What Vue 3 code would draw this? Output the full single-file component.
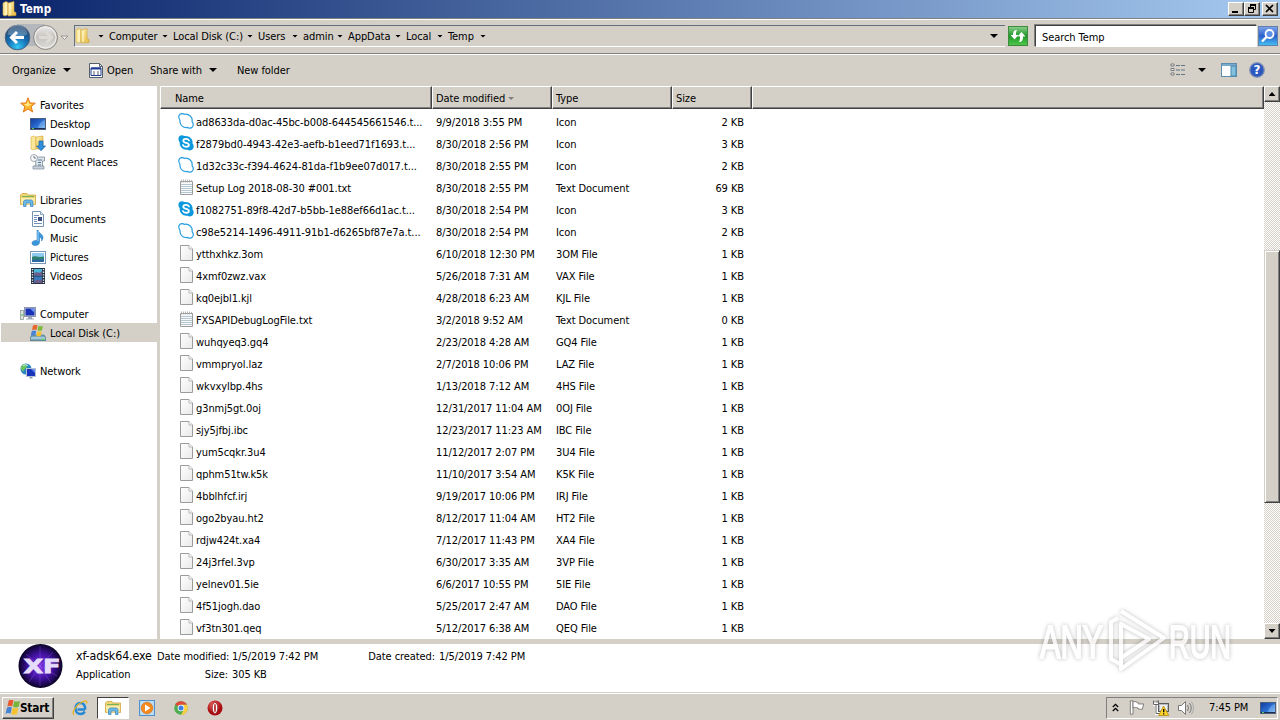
<template>
    <div class="window">
        <!-- icon sprite -->
        <svg class="sprite" width="0" height="0">
            <defs>
                <linearGradient id="gFolder" x1="0" y1="0" x2="1" y2="1">
                    <stop offset="0" stop-color="#fff3b0" />
                    <stop offset="1" stop-color="#e5b83c" />
                </linearGradient>
                <linearGradient id="gBlue" x1="0" y1="0" x2="1" y2="1">
                    <stop offset="0" stop-color="#123a9c" />
                    <stop offset="0.6" stop-color="#2f72d6" />
                    <stop offset="1" stop-color="#8fc4f5" />
                </linearGradient>
                <linearGradient id="gPage" x1="0" y1="0" x2="1" y2="1">
                    <stop offset="0" stop-color="#ffffff" />
                    <stop offset="1" stop-color="#e9e9e9" />
                </linearGradient>
                <radialGradient id="gBack" cx="0.5" cy="0.9" r="0.8">
                    <stop offset="0" stop-color="#35c8f5" />
                    <stop offset="0.5" stop-color="#1673b8" />
                    <stop offset="1" stop-color="#1d4470" />
                </radialGradient>
                <linearGradient id="gForward" x1="0" y1="0" x2="0" y2="1">
                    <stop offset="0" stop-color="#ececec" />
                    <stop offset="0.5" stop-color="#c4c2be" />
                    <stop offset="1" stop-color="#e2e0dc" />
                </linearGradient>
                <radialGradient id="gXf">
                    <stop offset="0" stop-color="#7a32dd" />
                    <stop offset="0.55" stop-color="#4312a4" />
                    <stop offset="0.85" stop-color="#1d0850" />
                    <stop offset="1" stop-color="#0a0322" />
                </radialGradient>
                <radialGradient id="gOpera" cx="0.4" cy="0.3">
                    <stop offset="0" stop-color="#f06a6a" />
                    <stop offset="1" stop-color="#a80c10" />
                </radialGradient>
                <linearGradient id="gSearch" x1="0" y1="0" x2="0" y2="1">
                    <stop offset="0" stop-color="#7fa6ea" />
                    <stop offset="0.5" stop-color="#2c5fce" />
                    <stop offset="1" stop-color="#45c3f2" />
                </linearGradient>
                <linearGradient id="gGreen" x1="0" y1="0" x2="0" y2="1">
                    <stop offset="0" stop-color="#8ccf8c" />
                    <stop offset="0.5" stop-color="#1f9628" />
                    <stop offset="1" stop-color="#4fc94a" />
                </linearGradient>
            </defs>
            <symbol id="i-folder" viewBox="0 0 16 16">
                <path d="M1 2 4 .5l2 1v12l-3 1.500-2-1z" fill="#fae79a" stroke="#d6ad42" stroke-width=".6" />
                <path d="M6 2l6-1.500v10l2 1v3L6 15z" fill="url(#gFolder)" stroke="#cfa035" stroke-width=".6" />
                <path d="M4 2v12M8 3v11" stroke="#fffbe0" />
            </symbol>
            <symbol id="i-star" viewBox="0 0 16 16">
                <path d="M8 .8 10 6l5.3.2-4.2 3.4 1.6 5.4L8 12l-4.700 3 1.600-5.400L.7 6.200 6 6z" fill="#fbb829" stroke="#e2761b" />
                <path d="M8 3 9 7l3 .4-5 2L4 7l3-.3z" fill="#ffe98a" />
            </symbol>
            <symbol id="i-desktop" viewBox="0 0 16 16">
                <rect x=".5" y="2.500" width="15" height="11" fill="url(#gBlue)" stroke="#4a5e7e" />
                <path d="M1 12.500h14" stroke="#1d2c4c" />
                <path d="M2 12.500h2" stroke="#5fc45a" />
                <path d="M15 4c-4 1-6 4-7 8h7z" fill="#9ed0f8" opacity=".4" />
            </symbol>
            <symbol id="i-downloads" viewBox="0 0 16 16">
                <path d="M1 2 4 1l2 1v12l-3 1-2-1z" fill="#fae79a" stroke="#d6ad42" stroke-width=".6" />
                <path d="M6 2l7-1v13H6z" fill="url(#gFolder)" stroke="#cfa035" stroke-width=".6" />
                <path d="M9 6h4v5h2.500L11 15.700 6.500 11H9z" fill="#2f8fdd" stroke="#1b5fa8" stroke-width=".7" />
            </symbol>
            <symbol id="i-recent" viewBox="0 0 16 16">
                <path d="M5 3h9.500v4h-2v7.500H4V12h2z" fill="#dde5ec" stroke="#7f8b97" stroke-width=".8" />
                <path d="M8 6h4M8 8.500h3M8 11h3" stroke="#5e7790" />
                <path d="M3 12h11v3H3z" fill="#c6d2dd" stroke="#7f8b97" stroke-width=".7" />
                <circle cx="4" cy="4" r="3.500" fill="#f6f8fa" stroke="#8b949e" stroke-width=".8" />
                <path d="M4 2v2h2" fill="none" stroke="#55606c" stroke-width=".8" />
            </symbol>
            <symbol id="i-libraries" viewBox="0 0 16 16">
                <path d="M.5 3 2 1.500h5L8 3h7.500v9.500H.5z" fill="#f3d878" stroke="#cfa43d" stroke-width=".8" />
                <path d="M2 4.500h12" stroke="#76b35c" stroke-width="1.200" />
                <path d="M.8 6h14.500l-1 6.500H1.600z" fill="#fbecaa" />
                <path d="M3.500 14.500V9.300L5 8h6.500L13 9.300v5.200h-2.500V11H6v3.500z" fill="#6db9e8" stroke="#3781b8" stroke-width=".7" />
            </symbol>
            <symbol id="i-documents" viewBox="0 0 16 16">
                <path d="M2.500.5h8l3 3v12h-11z" fill="#fdfefe" stroke="#7793ad" />
                <path d="M10.500.5v3h3" fill="#dce8f2" stroke="#7793ad" stroke-width=".8" />
                <path d="M4 4.500h5M4 6.500h3M4 8.500h3M4 10.500h3M4 12.500h8" stroke="#6781b4" stroke-width=".9" />
                <rect x="8" y="6" width="4" height="4" fill="#3b4f80" />
            </symbol>
            <symbol id="i-music" viewBox="0 0 16 16">
                <path d="M8 0c0 3 5 4 5 7.500 0 1.800-1 3-1.500 3.500C12 8 10 7 9.500 7v5c0 2.500-2 3.500-4.300 3.500S2 14.400 2 13c0-1.700 2-2.800 5-2.600V0z" fill="#3a97dc" stroke="#1c6dad" stroke-width=".5" />
                <path d="M8 1v10" stroke="#9bd5f8" />
            </symbol>
            <symbol id="i-pictures" viewBox="0 0 16 16">
                <rect x=".5" y="2.500" width="15" height="12" fill="#fff" stroke="#7a98b5" />
                <rect x="2" y="4" width="12" height="9" fill="#8ecbf0" />
                <path d="M2 8c3-2 5 1 12-.500V13H2z" fill="#31816f" />
                <path d="M2 11c4-1 8 0 12-1v3H2z" fill="#2b69a5" />
            </symbol>
            <symbol id="i-videos" viewBox="0 0 16 16">
                <rect x="1" y="0" width="14" height="16" fill="#233142" />
                <rect x="4" y="1" width="8" height="6.500" fill="#4db5da" />
                <rect x="4" y="8.500" width="8" height="6.500" fill="#3a79bd" />
                <path d="M4 6c3-4 5 1 8-3v4.500H4zM4 14c3-4 5 0 8-3v4H4z" fill="#6d5d8c" />
                <path d="M2.500 1v14M13.500 1v14" stroke="#e9eef2" stroke-width="1.400" stroke-dasharray="1.300 1.300" />
            </symbol>
            <symbol id="i-computer" viewBox="0 0 16 16">
                <rect x=".5" y="4.500" width="3" height="9" fill="#dfe4e0" stroke="#8e9a94" stroke-width=".8" />
                <path d="M1.500 9h1" stroke="#45b849" stroke-width="2" />
                <rect x="4.500" y="1.500" width="11" height="9" fill="#cfd6e2" stroke="#8d97a9" />
                <rect x="5.500" y="2.500" width="9" height="7" fill="#1932b8" />
                <path d="M10 2.500h4.500v4.500z" fill="#6a91ee" />
                <path d="M8 11h4v1.500h2v1H6v-1h2z" fill="#9ba6b8" />
            </symbol>
            <symbol id="i-disk" viewBox="0 0 16 16">
                <path d="M2 10h12l2 3v2.500H0V13z" fill="#7ba7bd" stroke="#4b7387" stroke-width=".7" />
                <path d="M1 13h14" stroke="#d2e7f0" />
                <path d="M11.500 14.300h3" stroke="#56e05d" stroke-width="1.200" />
                <path d="M3 .5c2-1 3.500-.500 4.500 0L6.500 5c-1-.700-3-.700-4.500 0z" fill="#e8642b" />
                <path d="M8.500.8c1.500.800 2.500.700 4.500 0l-1 4.500c-1.500.700-3 .700-4.500 0z" fill="#7cba3c" />
                <path d="M1.800 6c1.500-.800 3-.700 4.500 0l-1 4.500c-1.500-.700-3-.700-4.500 0z" fill="#4a83d6" />
                <path d="M7.300 6.300c1.500.800 2.500.700 4.500 0l-1 4.500c-1.500.700-3 .700-4.500 0z" fill="#f5c22e" />
            </symbol>
            <symbol id="i-network" viewBox="0 0 16 16">
                <circle cx="6" cy="6" r="5.500" fill="#2785bf" />
                <path d="M2 2.500C4 0 6 1 7 2.500S4 6 3.500 8 1 6 .7 5zM7 7l3-2 1 3-3 3z" fill="#6cc55c" />
                <path d="M3 2.500q3-1.500 5 0" stroke="#c8ecff" fill="none" />
                <rect x="6.500" y="5.500" width="9" height="8" fill="#1834bd" stroke="#b8c3d6" />
                <path d="M11 6h4v4z" fill="#658cf0" />
                <path d="M9.500 14h3v1.500h-3z" fill="#8e99ab" />
            </symbol>
            <symbol id="i-skype-outline" viewBox="0 0 16 16">
                <path d="M2 1.200C3.500.3 5.200.6 6.200 1.300c5-.8 8.600 2.900 7.900 7.300 1.500 2 1.500 3.800.4 5.200-1.300 1.500-3.300 1.600-4.800.6C5 15.200 1.500 11.800 2 7.300.5 5 .3 2.800 2 1.200z" fill="#fff" stroke="#2a9fe0" stroke-width="1.200" />
            </symbol>
            <symbol id="i-skype" viewBox="0 0 16 16">
                <path d="M1.500 1C3 0 5 .2 6.200 1c5-.8 9 2.900 8.300 7.300 1.700 2.200 1.500 4.200.3 5.700-1.500 1.800-3.600 1.700-5.200.7C5 15.500 1.200 11.800 1.700 7.300 0 5 0 2.600 1.500 1z" fill="#0b98dc" />
                <path d="M11 5.500C10 3.300 5.300 3.300 5.300 5.700c0 2.800 5.600 1.500 5.600 4.200 0 2.400-5 2.500-6 .100" fill="none" stroke="#fff" stroke-width="1.800" stroke-linecap="round" />
            </symbol>
            <symbol id="i-file" viewBox="0 0 16 16">
                <path d="M2.500.5H11l3.500 3.500v11.500h-12z" fill="url(#gPage)" stroke="#9b9b9b" />
                <path d="M11 .5v3.500h3.500" fill="#fff" stroke="#b5b5b5" />
            </symbol>
            <symbol id="i-text" viewBox="0 0 16 16">
                <path d="M2.500 2.500h12v13h-12z" fill="#f7f9fa" stroke="#9b9b9b" />
                <path d="M3 5.500h11M3 7.500h11M3 9.500h11M3 11.500h11M3 13.500h11" stroke="#b6c6cf" />
                <path d="M3.500.5v3M5.500.5v3M7.500.5v3M9.500.5v3M11.500.5v3M13.500 1v2" stroke="#a5a5a5" stroke-width=".8" />
            </symbol>
            <symbol id="i-flag" viewBox="0 0 18 18">
                <path d="M1.500 1.500h3v15h-3z" fill="#fff" stroke="#73716d" />
                <path d="M4.500 2.500c3-1 4 1 6 1v1.500h6l-1.500 6c-2 .500-3-.500-5-.500V9.500c-2-.500-3.500-1-5.500 0z" fill="#fff" stroke="#73716d" />
            </symbol>
            <symbol id="i-windows" viewBox="0 0 16 16">
                <path d="M4 .5C6-.7 7.500-.5 9 .5L7.600 7C6 6 4.200 6 2.500 7z" fill="#e9582c" />
                <path d="M10 1c2 1 4 .8 6-.300L14.500 7.300c-2 1-4 1-6 0z" fill="#76b43b" />
                <path d="M2.200 8C4 7 5.800 7 7.300 8L6 14.500C4 13.500 2.500 13.500.5 14.700z" fill="#4783d4" />
                <path d="M8.200 8.300c2 1 4 1 6 0L12.700 15c-2 1-4 1-6 0z" fill="#f6c32f" />
            </symbol>
        </svg>

        <!-- title bar -->
        <header class="title-bar">
            <svg class="icon16"><use href="#i-folder" /></svg>
            <span class="title">Temp</span>
            <div class="controls">
                <button class="ctl"><svg width="12" height="10"><path d="M2 8h6" stroke="#000" stroke-width="2" /></svg></button>
                <button class="ctl">
                    <svg width="12" height="10">
                        <path d="M4.500 4V1.500h5v4H8" fill="none" stroke="#000" />
                        <path d="M4 1h6M2 4h6" stroke="#000" stroke-width="2" />
                        <path d="M2.500 4v4.500h5V4" fill="none" stroke="#000" />
                    </svg>
                </button>
                <button class="ctl close"><svg width="12" height="10"><path d="M2 1l7 7M9 1 2 8" stroke="#000" stroke-width="1.700" /></svg></button>
            </div>
        </header>

        <!-- address bar -->
        <div class="nav-bar">
            <svg class="nav-buttons" width="72" height="32">
                <path d="M17 4h28v22H17z" fill="#b4b8bd" />
                <circle cx="17.500" cy="17.500" r="12.300" fill="url(#gBack)" stroke="#48627e" />
                <path d="M7.500 14.500a10 10 0 0 1 20 0q-10 4-20 0z" fill="#fff" opacity=".25" />
                <path d="M24 17.500H12.500M17 12 11.500 17.500l5.500 5.500" fill="none" stroke="#fff" stroke-width="3" />
                <circle cx="45.500" cy="17.500" r="12" fill="url(#gForward)" stroke="#8b8984" />
                <circle cx="45.500" cy="17.500" r="10.500" fill="none" stroke="#f2f1ee" />
                <path d="M39 17.500h11M46 12 51.500 17.500 46 23" fill="none" stroke="#dddad6" stroke-width="3" />
                <path d="M61 16h7L64.500 19.500z" fill="#eceae6" stroke="#8b8984" stroke-width=".8" />
            </svg>
            <div class="address">
                <svg class="icon16"><use href="#i-folder" /></svg>
                <span class="arrow first"></span>
                <template v-for="crumb in crumbs" :key="crumb.label">
                    <span class="crumb" :style="{ width: crumb.width + 'px' }">{{ crumb.label }}</span>
                    <span class="arrow"></span>
                </template>
                <span class="caret address-caret"></span>
            </div>
            <button class="refresh">
                <svg width="20" height="20">
                    <rect x=".5" y=".5" width="19" height="19" fill="url(#gGreen)" stroke="#3f8a3f" />
                    <path d="M9 4C5.500 4 5 6.500 5 9H2.500l4 4.500L10.500 9H8c0-2 0-3.500 1-5z" fill="#fff" />
                    <path d="M11 16c3.500 0 4-2.500 4-5.500h2.500l-4-4.500-4 4.500H12c0 2 0 4-1 5.500z" fill="#fff" />
                </svg>
            </button>
            <div class="search">Search Temp</div>
            <svg class="search-btn" width="20" height="20">
                <rect x=".5" y=".5" width="19" height="19" fill="url(#gSearch)" stroke="#6280ae" />
                <circle cx="11.500" cy="8" r="4" fill="#5e90e6" stroke="#fff" stroke-width="1.800" />
                <path d="M8.500 11 4 15.500" stroke="#fff" stroke-width="2.400" />
            </svg>
        </div>

        <!-- command bar -->
        <div class="command-bar">
            <span class="cmd organize">Organize</span>
            <span class="caret"></span>
            <svg class="open-icon" width="14" height="16">
                <path d="M.5 1.500h10l3 3v11H.5z" fill="#fff" stroke="#55606b" />
                <path d="M10.500 1.500v3h3" fill="none" stroke="#55606b" />
                <path d="M2 6h10v7.500H2z" fill="#fff" stroke="#1c3c94" />
                <path d="M2 6.500h10" stroke="#1c3c94" stroke-width="2" />
                <path d="M4 10h2M8 10h2M4 12h2M8 12h2" stroke="#5b5875" />
            </svg>
            <span class="cmd open">Open</span>
            <span class="cmd share">Share with</span>
            <span class="caret"></span>
            <span class="cmd new-folder">New folder</span>
            <div class="view-tools">
                <svg width="16" height="14">
                    <path d="M1 1h3v2H1zM1 5.500h3v2H1zM1 10h3v2H1z" fill="#fff" stroke="#77797b" />
                    <path d="M6 2.500h4M11 2.500h4M6 7h4M11 7h4M6 11.500h4M11 11.500h4" stroke="#657482" />
                </svg>
                <span class="caret"></span>
                <svg class="pane-icon" width="16" height="14">
                    <rect x=".5" y=".5" width="15" height="13" fill="#fff" stroke="#5f8cac" />
                    <path d="M1 2h14" stroke="#79aacb" stroke-width="2" />
                    <path d="M10 3h5v10h-5z" fill="#83c0df" stroke="#4a86aa" />
                </svg>
                <svg class="help-icon" width="16" height="16">
                    <circle cx="8" cy="8" r="7.300" fill="#2c57bf" stroke="#8795b5" stroke-width="1.300" />
                    <text x="8" y="12.300" text-anchor="middle" class="help-mark">?</text>
                </svg>
            </div>
        </div>

        <main class="content">
            <!-- navigation pane -->
            <aside class="sidebar">
                <div v-for="(item, index) in places" :key="index" class="place"
                    :class="{ child: item.child, selected: item.selected }">
                    <template v-if="item.label">
                        <svg class="icon16"><use :href="'#i-' + item.icon" /></svg>
                        <span class="place-label">{{ item.label }}</span>
                    </template>
                </div>
            </aside>

            <!-- file list -->
            <section class="listing">
                <div class="list-head row">
                    <div class="col-name">Name</div>
                    <div class="col-date">Date modified<span class="arrow sort"></span></div>
                    <div class="col-type">Type</div>
                    <div class="col-size">Size</div>
                    <div class="col-rest"></div>
                </div>
                <div class="list-body">
                    <div v-for="file in files" :key="file.name" class="row">
                        <div class="col-name">
                            <svg class="icon16"><use :href="'#i-' + file.icon" /></svg>
                            <span>{{ file.name }}</span>
                        </div>
                        <div class="col-date">{{ file.date }}</div>
                        <div class="col-type">{{ file.type }}</div>
                        <div class="col-size">{{ file.size }} KB</div>
                    </div>
                </div>
            </section>

            <div class="scrollbar">
                <button class="scroll-btn"><span class="tri up"></span></button>
                <div class="track before"></div>
                <div class="thumb"></div>
                <div class="track after"></div>
                <button class="scroll-btn"><span class="tri"></span></button>
            </div>
        </main>

        <!-- details pane -->
        <footer class="details">
            <svg class="xf" width="46" height="45" viewBox="0 0 46 45">
                <circle cx="23.500" cy="22" r="22" fill="url(#gXf)" />
                <path d="M9 10 23 22 36 8M5 30 23 22 40 32M23 2v40M12 38 23 22 34 39" stroke="#a56bff" stroke-width=".6" opacity=".5" fill="none" />
                <text x="6.500" y="29" textLength="37" lengthAdjust="spacingAndGlyphs" class="xf-mark">XF</text>
            </svg>
            <div class="detail-grid">
                <span class="exe">xf-adsk64.exe</span>
                <span class="key">Date modified:</span>
                <span class="value">1/5/2019 7:42 PM</span>
                <span class="key">Date created:</span>
                <span class="value">1/5/2019 7:42 PM</span>
                <span>Application</span>
                <span class="key">Size:</span>
                <span class="value">305 KB</span>
            </div>
        </footer>

        <!-- taskbar -->
        <div class="taskbar">
            <button class="start">
                <svg width="15" height="15"><use href="#i-windows" /></svg>
                <span>Start</span>
            </button>
            <div class="task ie">
                <svg width="16" height="16">
                    <path d="M13 9.500H5.500M13 9.500C13.500 5.500 11.500 3 8.500 3 5.300 3 3.500 5.500 3.500 8.500s2 5.500 5 5.500c2 0 3.500-1 4.200-2.500" fill="none" stroke="#2488d4" stroke-width="2.500" />
                    <path d="M2 15C-1 12 5 4 11 1.500c3-1.200 4.500-.500 3.500 2" fill="none" stroke="#e6b422" stroke-width="1.300" />
                </svg>
            </div>
            <div class="task active"><svg class="icon16"><use href="#i-libraries" /></svg></div>
            <div class="task media">
                <svg width="16" height="16">
                    <rect x=".5" y=".5" width="15" height="15" fill="#bcdcf4" stroke="#4f90cc" />
                    <circle cx="8" cy="8" r="5.800" fill="#f48a1c" stroke="#d8660b" stroke-width=".6" />
                    <path d="M6 4.500 11.500 8 6 11.500z" fill="#fff" />
                </svg>
            </div>
            <div class="task chrome">
                <svg width="14" height="14" viewBox="0 0 14 14">
                    <circle cx="7" cy="7" r="6.800" fill="#4fae50" />
                    <path d="M7 7 1.100 3.600A6.800 6.800 0 0 1 13 3.800H7z" fill="#df4b38" />
                    <path d="M7 3.800h6A6.800 6.800 0 0 1 7 13.800L10 8.500z" fill="#fbcf40" />
                    <circle cx="7" cy="7" r="3.300" fill="#fff" />
                    <circle cx="7" cy="7" r="2.500" fill="#3f7fe4" />
                </svg>
            </div>
            <div class="task opera">
                <svg width="16" height="16">
                    <circle cx="8" cy="8" r="7.500" fill="url(#gOpera)" />
                    <ellipse cx="8" cy="8" rx="2.700" ry="5.500" fill="#fff" stroke="#7d0d10" stroke-width=".6" />
                    <ellipse cx="8" cy="8" rx=".9" ry="4.300" fill="#b5272b" />
                </svg>
            </div>
            <div class="tray">
                <svg class="chevrons" width="7" height="10">
                    <path d="M.8 4 3.500 1.300 6.200 4M.8 8 3.500 5.300 6.200 8" fill="none" stroke="#000" stroke-width="1.300" />
                </svg>
                <svg class="tray-flag" width="16" height="17"><use href="#i-flag" /></svg>
                <svg class="tray-net" width="16" height="16">
                    <rect x="5.500" y="3.500" width="10" height="8" fill="#b9bcc0" stroke="#5b5b5b" />
                    <path d="M7 5h7v5H7z" fill="#eceff1" />
                    <path d="M1.500.5v4h2v9h4" fill="none" stroke="#fff" stroke-width="3" />
                    <path d="M.5.500v4h5v-4M3 4.500v9h4M2 .5v2M4 .5v2" fill="none" stroke="#666" />
                    <path d="M10.500 6 15.800 15.500H5.700z" fill="#ffd52d" stroke="#b28804" stroke-width=".8" />
                    <path d="M10.700 9v3.200M10.700 13.300v1.300" stroke="#000" stroke-width="1.300" />
                </svg>
                <svg class="tray-sound" width="17" height="16">
                    <path d="M1.500 5.500h3l4-4v13l-4-4h-3z" fill="#fff" stroke="#777" />
                    <path d="M10.500 5q2 3 0 6M12.500 3q3.500 5 0 10" fill="none" stroke="#777" />
                    <path d="M14.500 1.500q4 6.500 0 13" fill="none" stroke="#aaa" />
                </svg>
                <span class="clock">7:45 PM</span>
                <svg class="icon16"><use href="#i-desktop" /></svg>
            </div>
        </div>

        <!-- watermark over the desktop -->
        <svg class="watermark" width="250" height="80" viewBox="0 0 250 80">
            <text x="10" y="56" textLength="63" lengthAdjust="spacingAndGlyphs">ANY</text>
            <path d="M88 16 81 20v37l9 5" />
            <path d="M91 9 134 36 91 67V22l28 15-28 19" />
            <text x="139" y="56" textLength="62" lengthAdjust="spacingAndGlyphs">RUN</text>
        </svg>
    </div>
</template>

<script setup>
import { ref } from 'vue';

const crumbs = ref([
    { label: 'Computer', width: 47 },
    { label: 'Local Disk (C:)', width: 68 },
    { label: 'Users', width: 28 },
    { label: 'admin', width: 28 },
    { label: 'AppData', width: 41 },
    { label: 'Local', width: 25 },
    { label: 'Temp', width: 26 }
]);

// empty entries are the gaps between groups
const places = ref([
    { label: 'Favorites', icon: 'star' },
    { label: 'Desktop', icon: 'desktop', child: true },
    { label: 'Downloads', icon: 'downloads', child: true },
    { label: 'Recent Places', icon: 'recent', child: true },
    {},
    { label: 'Libraries', icon: 'libraries' },
    { label: 'Documents', icon: 'documents', child: true },
    { label: 'Music', icon: 'music', child: true },
    { label: 'Pictures', icon: 'pictures', child: true },
    { label: 'Videos', icon: 'videos', child: true },
    {},
    { label: 'Computer', icon: 'computer' },
    { label: 'Local Disk (C:)', icon: 'disk', child: true, selected: true },
    {},
    { label: 'Network', icon: 'network' }
]);

const files = ref([
    { name: 'ad8633da-d0ac-45bc-b008-644545661546.t...', date: '9/9/2018 3:55 PM', type: 'Icon', size: 2, icon: 'skype-outline' },
    { name: 'f2879bd0-4943-42e3-aefb-b1eed71f1693.t...', date: '8/30/2018 2:56 PM', type: 'Icon', size: 3, icon: 'skype' },
    { name: '1d32c33c-f394-4624-81da-f1b9ee07d017.t...', date: '8/30/2018 2:55 PM', type: 'Icon', size: 2, icon: 'skype-outline' },
    { name: 'Setup Log 2018-08-30 #001.txt', date: '8/30/2018 2:55 PM', type: 'Text Document', size: 69, icon: 'text' },
    { name: 'f1082751-89f8-42d7-b5bb-1e88ef66d1ac.t...', date: '8/30/2018 2:54 PM', type: 'Icon', size: 3, icon: 'skype' },
    { name: 'c98e5214-1496-4911-91b1-d6265bf87e7a.t...', date: '8/30/2018 2:54 PM', type: 'Icon', size: 2, icon: 'skype-outline' },
    { name: 'ytthxhkz.3om', date: '6/10/2018 12:30 PM', type: '3OM File', size: 1, icon: 'file' },
    { name: '4xmf0zwz.vax', date: '5/26/2018 7:31 AM', type: 'VAX File', size: 1, icon: 'file' },
    { name: 'kq0ejbl1.kjl', date: '4/28/2018 6:23 AM', type: 'KJL File', size: 1, icon: 'file' },
    { name: 'FXSAPIDebugLogFile.txt', date: '3/2/2018 9:52 AM', type: 'Text Document', size: 0, icon: 'text' },
    { name: 'wuhqyeq3.gq4', date: '2/23/2018 4:28 AM', type: 'GQ4 File', size: 1, icon: 'file' },
    { name: 'vmmpryol.laz', date: '2/7/2018 10:06 PM', type: 'LAZ File', size: 1, icon: 'file' },
    { name: 'wkvxylbp.4hs', date: '1/13/2018 7:12 AM', type: '4HS File', size: 1, icon: 'file' },
    { name: 'g3nmj5gt.0oj', date: '12/31/2017 11:04 AM', type: '0OJ File', size: 1, icon: 'file' },
    { name: 'sjy5jfbj.ibc', date: '12/23/2017 11:23 AM', type: 'IBC File', size: 1, icon: 'file' },
    { name: 'yum5cqkr.3u4', date: '11/12/2017 2:07 PM', type: '3U4 File', size: 1, icon: 'file' },
    { name: 'qphm51tw.k5k', date: '11/10/2017 3:54 AM', type: 'K5K File', size: 1, icon: 'file' },
    { name: '4bblhfcf.irj', date: '9/19/2017 10:06 PM', type: 'IRJ File', size: 1, icon: 'file' },
    { name: 'ogo2byau.ht2', date: '8/12/2017 11:04 AM', type: 'HT2 File', size: 1, icon: 'file' },
    { name: 'rdjw424t.xa4', date: '7/12/2017 11:43 PM', type: 'XA4 File', size: 1, icon: 'file' },
    { name: '24j3rfel.3vp', date: '6/30/2017 3:35 AM', type: '3VP File', size: 1, icon: 'file' },
    { name: 'yelnev01.5ie', date: '6/6/2017 10:55 PM', type: '5IE File', size: 1, icon: 'file' },
    { name: '4f51jogh.dao', date: '5/25/2017 2:47 AM', type: 'DAO File', size: 1, icon: 'file' },
    { name: 'vf3tn301.qeq', date: '5/12/2017 6:38 AM', type: 'QEQ File', size: 1, icon: 'file' }
]);
</script>

<style>
body {
    margin: 0;
    overflow: hidden;
}
</style>

<style scoped>
.window {
    position: relative;
    display: flex;
    flex-direction: column;
    width: 1280px;
    height: 720px;
    overflow: hidden;
    background: #d4d0c8;
    color: #000;
    font-family: Tahoma, "DejaVu Sans Condensed", "DejaVu Sans", sans-serif;
    font-stretch: condensed;
    font-size: 11px;
    line-height: 15px;
    letter-spacing: -0.08px;
    white-space: nowrap;
}

.window * {
    box-sizing: border-box;
}

.sprite {
    position: absolute;
}

svg {
    flex: none;
    display: block;
}

button {
    display: flex;
    align-items: center;
    justify-content: center;
    padding: 0;
    font: inherit;
    background: #d4d0c8;
    border: 1px solid;
    border-color: #fff #404040 #404040 #fff;
    box-shadow: inset -1px -1px 0 #808080;
}

.icon16 {
    width: 16px;
    height: 16px;
}

.arrow {
    flex: none;
    width: 17px;
    height: 3px;
    background: #000;
    clip-path: polygon(6px 0, 12px 0, 9px 3px);
}

.caret {
    flex: none;
    width: 8px;
    height: 4px;
    background: #000;
    clip-path: polygon(0 0, 100% 0, 50% 100%);
}

.title-bar {
    flex: none;
    display: flex;
    align-items: center;
    height: 18px;
    padding: 0 2px;
    background: linear-gradient(90deg, #0a246a, #a6caf0);
    color: #fff;
}

.title {
    flex: 1;
    margin-left: 2px;
    font-size: 11.5px;
    line-height: 14px;
    font-weight: bold;
    letter-spacing: 0.1px;
}

.controls {
    display: flex;
}

.ctl {
    width: 16px;
    height: 14px;
}

.close {
    margin-left: 2px;
}

.nav-bar {
    flex: none;
    display: flex;
    align-items: center;
    height: 36px;
    border-top: 1px solid #808080;
    border-bottom: 1px solid #808080;
    box-shadow: inset 0 1px 0 #fff, 0 1px 0 #fff;
}

.nav-buttons {
    margin-right: 2px;
}

.address {
    display: flex;
    align-items: center;
    width: 931px;
    height: 22px;
    border-top: 1px solid #62717f;
    border-left: 1px solid #62717f;
    border-bottom: 1px solid #fff;
}

.arrow.first {
    margin-left: 1px;
}

.crumb {
    flex: none;
    padding-top: 2px;
    line-height: 16px;
}

.address-caret {
    margin: 0 7px 0 auto;
}

.refresh {
    width: 20px;
    height: 20px;
    margin-left: 3px;
    border: none;
    box-shadow: none;
}

.search {
    width: 222px;
    height: 22px;
    margin: 0 1px 0 7px;
    padding: 4px 6px;
    background: #fff;
    border: 1px solid;
    border-color: #404040 #fff #fff #404040;
    box-shadow: -1px -1px 0 #808080;
}

.command-bar {
    flex: none;
    display: flex;
    align-items: center;
    height: 32px;
    padding: 0 15px 0 12px;
}

.organize {
    width: 51px;
}

.open-icon {
    margin: 0 4px 0 18px;
}

.open {
    width: 43px;
}

.share {
    width: 59px;
}

.new-folder {
    margin-left: 20px;
}

.view-tools {
    flex: 1;
    display: flex;
    align-items: center;
    justify-content: flex-end;
}

.view-tools .caret {
    margin: 0 15px 0 12px;
}

.help-icon {
    margin-left: 12px;
}

.help-mark {
    font: bold 12px "DejaVu Sans", sans-serif;
    fill: #fff;
}

.content {
    flex: none;
    display: flex;
    height: 553px;
}

.sidebar {
    width: 160px;
    padding-top: 9px;
    background: #fff;
    border-right: 3px solid #d4d0c8;
}

.place {
    display: flex;
    align-items: center;
    gap: 4px;
    height: 19px;
    margin-left: 1px;
    padding-left: 19px;
}

.place.child {
    padding-left: 29px;
}

.place.selected {
    width: 159px;
    background: #d4d0c8;
}

.place-label {
    padding-top: 2px;
}

.listing {
    width: 1104px;
    background: #fff;
}

.row {
    display: flex;
    height: 22px;
    line-height: 23px;
}

.col-name {
    display: flex;
    align-items: center;
    width: 272px;
    padding-left: 18px;
}

.col-name .icon16 {
    margin: -2px 2px 0 0;
}

.col-date {
    width: 120px;
    padding-left: 4px;
}

.col-type {
    width: 120px;
    padding-left: 4px;
}

.col-size {
    width: 80px;
    padding-right: 8px;
    text-align: right;
}

.list-head {
    height: 23px;
    background: #d4d0c8;
}

.list-head > div {
    border: 1px solid;
    border-color: #fff #404040 #404040 #fff;
    box-shadow: inset -1px -1px 0 #808080;
}

.list-head .col-name {
    padding: 2px 0 0 14px;
}

.list-head .col-date {
    display: flex;
    align-items: center;
    padding: 2px 0 0 3px;
}

.list-head .col-type {
    padding-left: 3px;
}

.list-head .col-size {
    padding-left: 3px;
    text-align: left;
}

.col-rest {
    flex: 1;
}

.sort {
    margin-left: -3px;
    background: #808080;
}

.list-body {
    padding-top: 2px;
}

.scrollbar {
    display: flex;
    flex-direction: column;
    width: 16px;
}

.scroll-btn {
    flex: none;
    height: 16px;
}

.tri {
    width: 7px;
    height: 4px;
    background: #000;
    clip-path: polygon(0 0, 100% 0, 50% 100%);
}

.tri.up {
    clip-path: polygon(0 100%, 100% 100%, 50% 0);
}

.track {
    background: repeating-conic-gradient(#d4d0c8 0 25%, #fff 0 50%) 0 0 / 2px 2px;
}

.before {
    height: 148px;
}

.thumb {
    height: 253px;
    background: #d4d0c8;
    border: 1px solid;
    border-color: #d4d0c8 #404040 #404040 #d4d0c8;
    box-shadow: inset 1px 1px 0 #fff, inset -1px -1px 0 #808080;
}

.after {
    flex: 1;
}

.details {
    flex: none;
    display: flex;
    height: 53px;
    padding-left: 17px;
    background: #fff;
    border-top: 5px solid #d4d0c8;
}

.xf-mark {
    font: bold 19px "DejaVu Sans", sans-serif;
    fill: #e6dcfb;
    stroke: #e6dcfb;
    stroke-width: 0.8px;
}

.detail-grid {
    display: grid;
    grid-template-columns: 77px 71px 128px 71px 100px;
    grid-auto-rows: 18px;
    column-gap: 4px;
    margin-left: 13px;
    padding-top: 3px;
    line-height: 19px;
}

.exe {
    font-size: 12.3px;
    line-height: 18px;
}

.key {
    text-align: right;
}

.taskbar {
    flex: 1;
    display: flex;
    align-items: center;
    padding: 2px 2px 0;
    border-top: 1px solid #d4d0c8;
    box-shadow: inset 0 1px 0 #fff;
}

.start {
    width: 52px;
    height: 22px;
    padding-right: 2px;
    font-weight: bold;
    font-size: 11.8px;
    line-height: 14px;
    letter-spacing: -0.2px;
}

.task {
    display: flex;
    align-items: center;
    justify-content: center;
    height: 22px;
}

.ie {
    width: 52px;
}

.active {
    width: 32px;
    margin-left: -9px;
    background: #fff;
    border: 1px solid;
    border-color: #404040 #fff #fff #404040;
}

.media {
    width: 36px;
}

.chrome {
    width: 32px;
}

.opera {
    width: 36px;
}

.tray {
    display: flex;
    align-items: center;
    width: 172px;
    height: 22px;
    margin-left: auto;
    padding-left: 5px;
    line-height: 14px;
    border: 1px solid;
    border-color: #808080 #fff #fff #808080;
}

.tray-flag {
    margin-left: 10px;
}

.tray-net {
    margin-left: 8px;
}

.tray-sound {
    margin-left: 8px;
}

.clock {
    width: 51px;
    margin-left: 15px;
}

.watermark {
    position: absolute;
    left: 1030px;
    top: 602px;
    filter: drop-shadow(0 0 2px rgba(0, 0, 0, 0.35));
    opacity: 0.75;
}

.watermark text {
    font: 46px "Liberation Sans", sans-serif;
    fill: #fff;
    stroke: #fff;
    stroke-width: 2px;
}

.watermark path {
    fill: none;
    stroke: #fff;
    stroke-width: 4px;
    stroke-linejoin: round;
}
</style>
